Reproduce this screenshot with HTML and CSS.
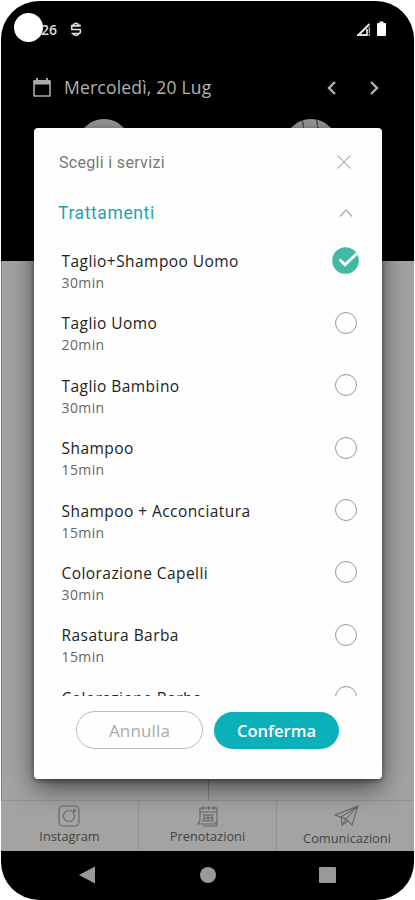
FILE: index.html
```html
<!DOCTYPE html>
<html lang="it">
<head>
<meta charset="utf-8">
<title>Scegli i servizi</title>
<link rel="stylesheet" href="styles.css">
</head>
<body>
<div class="phone">
  <header class="top">
    <div class="status">
      <span class="camera"></span><span class="clock">26</span>
      <svg class="debug" width="12" height="15" viewBox="0 0 12 15"><path d="M1 3.500h10M3 3Q6-.5 9 3M1 7.500h10M10 4H3.500Q1.500 4 1.500 5.700T3.500 7.500H8.500Q10.500 7.500 10.500 9.500T8.500 11.500H1.500M3 12Q6 15 9 12" fill="none" stroke="#ddd" stroke-width="1.500"/></svg>
      <svg class="signal" width="32" height="17" viewBox="0 0 32 17"><path d="M2 14.500L13.500 3" fill="none" stroke="#eee" stroke-width="2"/><path d="M1 14h10V8" fill="none" stroke="#ddd" stroke-width="1.800"/><path d="M13.300 6v6M13.300 13v2" stroke="#bbb" stroke-width="1.300"/><path d="M21 3q0-1 1-1h1.500V.5h4V2H29q1 0 1 1v11q0 1-1 1h-7q-1 0-1-1z" fill="#fff"/></svg>
    </div>
    <div class="date">
      <svg width="20" height="22" viewBox="0 0 20 22"><path d="M2 4.500h16v14.500H2z" fill="none" stroke="#aaa" stroke-width="1.600" stroke-linejoin="round"/><path d="M1.500 3h17v4.500h-17zM4 1h2v4H4zM14 1h2v4h-2z" fill="#aaa"/></svg>
      <span class="day">Mercoledì, 20 Lug</span>
      <svg class="arrows" width="54" height="16" viewBox="0 0 54 16"><path d="M9 2L3 8l6 6M45 2l6 6-6 6" fill="none" stroke="#b2b2b2" stroke-width="2.400"/></svg>
    </div>
    <div class="staff"><i class="avatar"></i><i class="avatar photo"></i></div>
  </header>
  <div class="agenda"><div></div><div></div></div>
  <nav class="tabs">
    <div class="tab"><svg width="24" height="24" viewBox="0 0 24 24"><rect x="2" y="2" width="20" height="20" rx="4"/><circle cx="12" cy="12" r="5.500"/><circle cx="17.500" cy="6.500" r="1"/></svg><span>Instagram</span></div>
    <div class="tab"><svg width="24" height="24" viewBox="0 0 24 24"><path d="M4 4h17v18H7M4 4v12l-2 4h17l2-3M4 8h17M7 2v4M12.500 2v4M18 2v4M7 11h11M7 14h11M6 17h12M8 11v6M12 11v6M16 11v6"/></svg><span>Prenotazioni</span></div>
    <div class="tab low"><svg width="26" height="24" viewBox="0 0 26 24"><path d="M1 11L24 2l-6 19-6-6zM24 2L12 15M24 2L7 13l1 8 4-6M8 21l6-4"/></svg><span>Comunicazioni</span></div>
  </nav>
  <div class="system">
    <svg width="413" height="49" viewBox="0 0 413 49"><path d="M78 24L94 15.500v17z" fill="#999"/><circle cx="207" cy="24" r="8" fill="#999"/><rect x="318" y="16" width="17" height="16" rx="1" fill="#999"/></svg>
  </div>
  <section class="dialog">
    <div class="title"><span>Scegli i servizi</span><svg width="16" height="16" viewBox="0 0 16 16"><path d="M1.500 1.500l13 13M14.500 1.500l-13 13" fill="none" stroke="#bbb" stroke-width="1.400"/></svg></div>
    <div class="group"><span>Trattamenti</span><svg width="14" height="10" viewBox="0 0 14 10"><path d="M1 8.500l6-6.500 6 6.500" fill="none" stroke="#aaa" stroke-width="1.200"/></svg></div>
    <div class="list">
      <div class="item"><div><b>Taglio+Shampoo Uomo</b><small>30min</small></div><svg class="check" width="27" height="27" viewBox="0 0 28 28"><circle cx="14" cy="14" r="13.800" fill="#42b9a4"/><path d="M8 13l5.500 5.500L25.500 7" fill="none" stroke="#fff" stroke-width="3"/></svg></div>
      <div class="item"><div><b>Taglio Uomo</b><small>20min</small></div><i class="radio"></i></div>
      <div class="item"><div><b>Taglio Bambino</b><small>30min</small></div><i class="radio"></i></div>
      <div class="item"><div><b>Shampoo</b><small>15min</small></div><i class="radio"></i></div>
      <div class="item"><div><b>Shampoo + Acconciatura</b><small>15min</small></div><i class="radio"></i></div>
      <div class="item"><div><b>Colorazione Capelli</b><small>30min</small></div><i class="radio"></i></div>
      <div class="item"><div><b>Rasatura Barba</b><small>15min</small></div><i class="radio"></i></div>
      <div class="item"><div><b>Colorazione Barba</b><small>15min</small></div><i class="radio"></i></div>
    </div>
    <div class="actions"><button class="cancel">Annulla</button><button class="confirm">Conferma</button></div>
  </section>
</div>
</body>
</html>
```
FILE: styles.css
```css
* { box-sizing: border-box; }
body { margin: 0; background: #fff; font-family: "Open Sans", "Noto Sans", sans-serif; }
svg { display: block; flex: none; }
.phone { position: relative; width: 413px; height: 899px; margin: 1px 0 0 1px; border-radius: 38px; overflow: hidden; background: #000; display: flex; flex-direction: column; }
.top { height: 260px; flex: none; display: flex; flex-direction: column; }
.status { height: 56px; padding: 0 26px 0 13px; display: flex; align-items: center; color: #ddd; font-size: 14px; font-weight: 600; }
.camera { width: 29px; height: 29px; margin-top: -4px; border-radius: 50%; background: #fff; }
.clock { margin: 1px 0 0 -2px; }
.debug { margin-left: 13px; }
.signal { margin-left: auto; }
.date { height: 61px; padding: 0 34px 0 32px; display: flex; align-items: center; color: #b2b2b2; margin-bottom: 1px; }
.date > svg:first-child { margin-left: -1px; }
.day { margin: -1px 0 0 12px; font-size: 17.5px; letter-spacing: .2px; }
.arrows { margin-left: auto; }
.staff { height: 10px; display: flex; justify-content: space-around; overflow: hidden; }
.avatar { width: 54px; height: 54px; border-radius: 50%; background: #999; }
.photo { background: repeating-linear-gradient(80deg, #999 0 12px, #555 13px 14px); }
.agenda { flex: 1; display: flex; background: #a3a3a3; }
.agenda div { flex: 1; border-left: 1px solid #808080; }
.tabs { height: 51px; display: flex; background: #a3a3a3; border-top: 1px solid #929292; }
.tab { flex: 1; display: flex; flex-direction: column; align-items: center; padding-top: 3px; font-size: 12.8px; line-height: 16px; color: #444; }
.tab + .tab { border-left: 1px solid #929292; }
.tab:first-child svg { margin-left: -2px; }
.tab svg { fill: none; stroke: #666; stroke-width: 1.1; }
.low span { margin: 2px 0 0 3px; }
.low svg { margin-left: 3px; }
.system { height: 49px; }
.dialog { position: absolute; left: 33px; top: 127px; width: 348px; height: 651px; background: #fefefe; border-radius: 4px; box-shadow: 0 9px 26px rgba(0,0,0,.55), 0 2px 5px rgba(0,0,0,.4); display: flex; flex-direction: column; }
.title, .group { display: flex; align-items: center; justify-content: space-between; font-family: Roboto, sans-serif; }
.title { height: 68px; padding: 0 30px 0 25px; font-size: 16px; color: #777; letter-spacing: .32px; }
.group { height: 34px; padding: 0 29px 0 24px; font-size: 17.5px; color: #1da5af; letter-spacing: .6px; }
.list { height: 466px; overflow: hidden; padding: 18px 24px 0 27px; }
.item { height: 62.4px; display: flex; justify-content: space-between; }
.item > div { display: flex; flex-direction: column; padding-left: .5px; }
.item b { font-size: 15.5px; line-height: 26px; font-weight: 500; color: #222; letter-spacing: .44px; white-space: nowrap; }
.item small { font-size: 14px; line-height: 17px; color: #666; letter-spacing: .4px; }
.check { margin-top: -1px; margin-left: auto; margin-right: -1px; }
.radio { width: 22px; height: 22px; margin: 1.5px 1px 0 0; border: 1px solid #999; border-radius: 50%; }
.actions { display: flex; gap: 11px; padding: 15px 0 0 42px; }
button { height: 38px; border-radius: 19px; padding: 0; font: 17px "Open Sans", "Noto Sans", sans-serif; }
.cancel { width: 127px; border: 1px solid #bbb; background: #fefefe; color: #aaa; letter-spacing: .15px; }
.confirm { width: 125px; height: 37px; margin-top: 1px; border: 0; background: #0cb0ba; color: #fff; font-size: 16.5px; font-weight: 600; }
```
